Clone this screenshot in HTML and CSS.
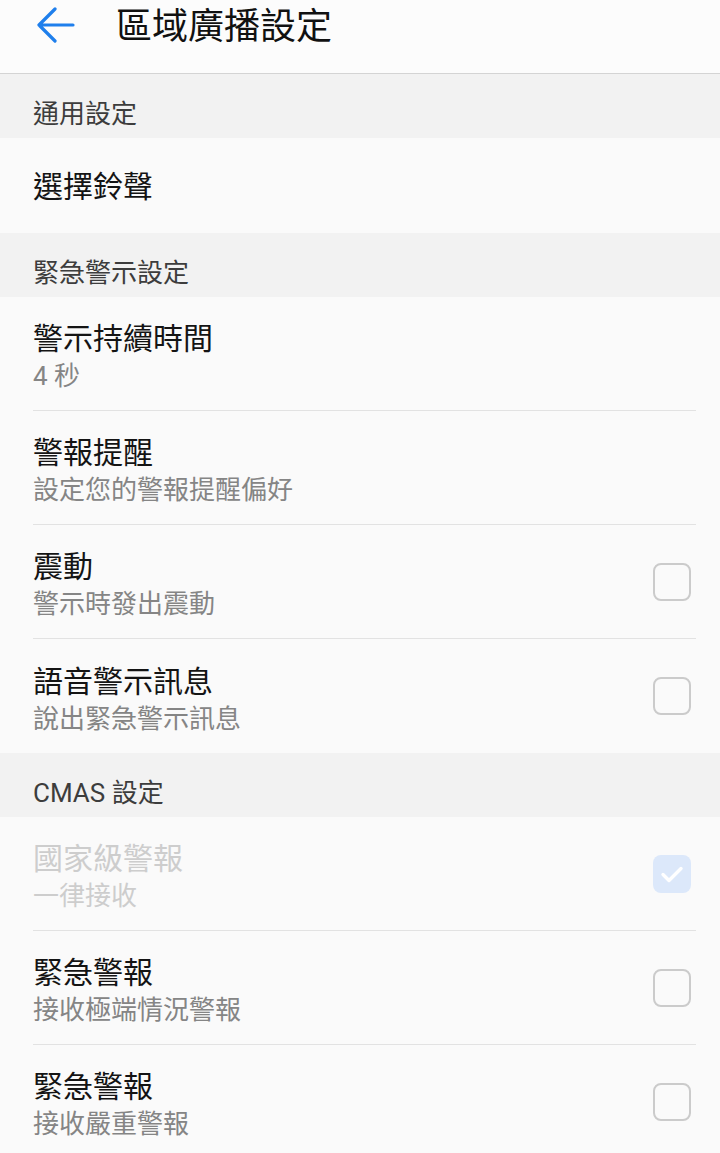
FILE: index.html
```html
<!DOCTYPE html>
<html lang="zh-TW">

<head>
    <meta charset="UTF-8">
    <meta name="viewport" content="width=device-width, initial-scale=1.0">
    <title>區域廣播設定</title>
    <link rel="stylesheet" href="styles.css">
</head>

<body>
    <header class="topbar">
        <span class="back">
            <svg width="40" height="40" viewBox="0 0 40 40">
                <path d="M37 18H3M19 2L3 18l16 16" fill="none" stroke="#1f7fec" stroke-width="3.2"
                    stroke-linecap="round" stroke-linejoin="round" />
            </svg>
        </span>
        <h1>區域廣播設定</h1>
    </header>

    <main>
        <!-- 通用設定 -->
        <div class="group">通用設定</div>
        <div class="item single">
            <div class="text">
                <p class="title">選擇鈴聲</p>
            </div>
        </div>

        <!-- 緊急警示設定 -->
        <div class="group">緊急警示設定</div>
        <div class="item">
            <div class="text">
                <p class="title">警示持續時間</p>
                <p class="sub">4 秒</p>
            </div>
        </div>
        <div class="item">
            <div class="text">
                <p class="title">警報提醒</p>
                <p class="sub">設定您的警報提醒偏好</p>
            </div>
        </div>
        <div class="item">
            <div class="text">
                <p class="title">震動</p>
                <p class="sub">警示時發出震動</p>
            </div>
            <span class="check"></span>
        </div>
        <div class="item last">
            <div class="text">
                <p class="title">語音警示訊息</p>
                <p class="sub">說出緊急警示訊息</p>
            </div>
            <span class="check"></span>
        </div>

        <!-- CMAS 設定 -->
        <div class="group">CMAS 設定</div>
        <div class="item disabled">
            <div class="text">
                <p class="title">國家級警報</p>
                <p class="sub">一律接收</p>
            </div>
            <span class="check checked">
                <svg width="38" height="38" viewBox="0 0 38 38">
                    <path d="M10 19.5l6 6 12-12" fill="none" stroke="#fff" stroke-width="3.4"
                        stroke-linecap="round" stroke-linejoin="round" />
                </svg>
            </span>
        </div>
        <div class="item">
            <div class="text">
                <p class="title">緊急警報</p>
                <p class="sub">接收極端情況警報</p>
            </div>
            <span class="check"></span>
        </div>
        <div class="item">
            <div class="text">
                <p class="title">緊急警報</p>
                <p class="sub">接收嚴重警報</p>
            </div>
            <span class="check"></span>
        </div>
    </main>
</body>

</html>
```

FILE: styles.css
```css
* {
    margin: 0;
    padding: 0;
    box-sizing: border-box;
}

body {
    width: 720px;
    background: #fafafa;
    font-family: Roboto, "Noto Sans CJK TC", sans-serif;
    overflow: hidden;
}

.topbar {
    display: flex;
    align-items: center;
    height: 74px;
    padding: 0 0 20px 36px;
    background: #fcfcfc;
    border-bottom: 1px solid #d4d4d4;
}

.back {
    display: flex;
    width: 40px;
    height: 40px;
}

.topbar h1 {
    margin-left: 40px;
    font-size: 36px;
    font-weight: 400;
    color: #111;
    line-height: 40px;
}

.group {
    height: 64px;
    padding: 23px 33px 0;
    background: #f2f2f2;
    font-size: 26px;
    line-height: 34px;
    color: #3d3d3d;
}

.item {
    display: flex;
    align-items: center;
    height: 114px;
    margin: 0 24px 0 33px;
    padding-right: 5px;
    border-bottom: 1px solid #e2e2e2;
}

.item.last {
    border-bottom: none;
}

.item.single {
    height: 95px;
    border-bottom: none;
}

.text {
    flex: 1;
    padding-top: 8px;
}

.single .text {
    padding-top: 2px;
}

.title {
    font-size: 30px;
    line-height: 36px;
    color: #141414;
}

.sub {
    margin-top: 1px;
    font-size: 26px;
    line-height: 36px;
    color: #858585;
}

.check {
    display: block;
    width: 38px;
    height: 38px;
    border: 2px solid #cbcbcb;
    border-radius: 8px;
}

.check.checked {
    border: none;
    background: #dce8fa;
}

.disabled .title,
.disabled .sub {
    color: #cdcdcd;
}
```
